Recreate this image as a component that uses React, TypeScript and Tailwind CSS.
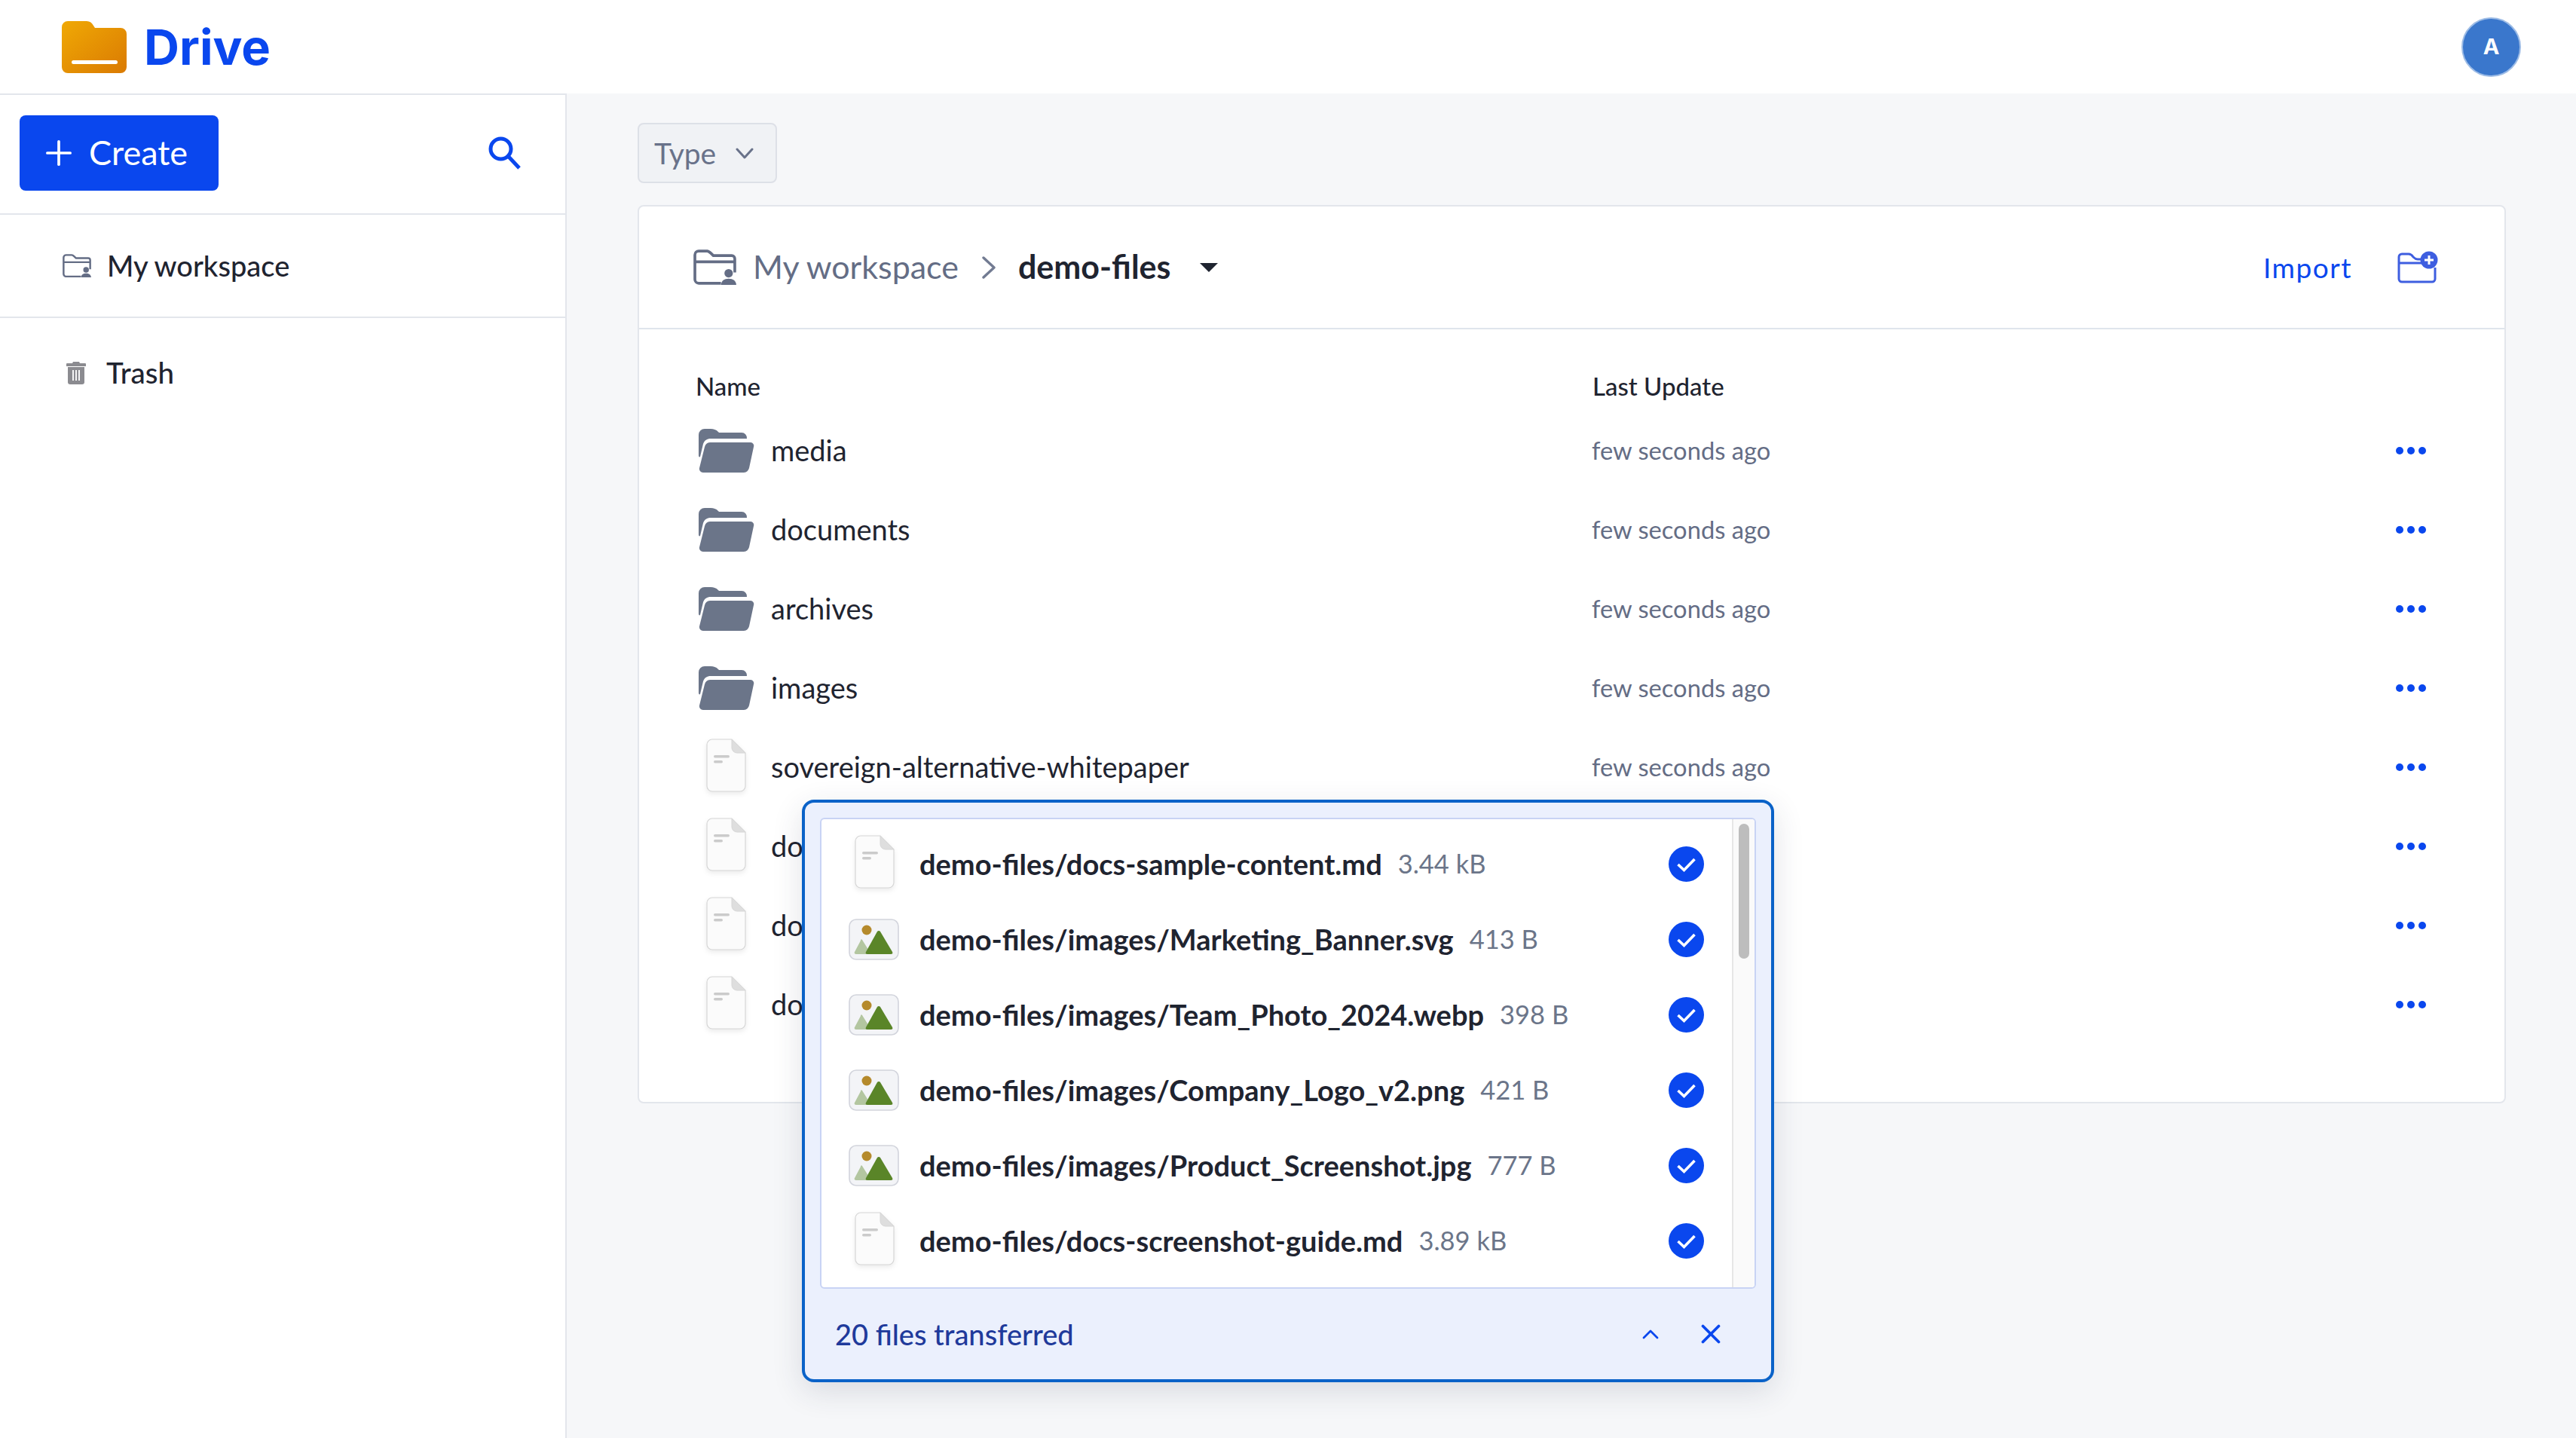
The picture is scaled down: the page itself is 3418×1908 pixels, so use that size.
import { Plus, X } from 'lucide-react';

const font = "font-['Lato','Liberation_Sans',sans-serif]";

const rows = [
  { name: 'media', kind: 'folder' },
  { name: 'documents', kind: 'folder' },
  { name: 'archives', kind: 'folder' },
  { name: 'images', kind: 'folder' },
  { name: 'sovereign-alternative-whitepaper', kind: 'doc' },
  { name: 'docs-intro', kind: 'doc' },
  { name: 'docs-guide', kind: 'doc' },
  { name: 'docs-setup', kind: 'doc' },
];

const transfers = [
  { name: 'demo-files/docs-sample-content.md', size: '3.44 kB', kind: 'doc' },
  { name: 'demo-files/images/Marketing_Banner.svg', size: '413 B', kind: 'image' },
  { name: 'demo-files/images/Team_Photo_2024.webp', size: '398 B', kind: 'image' },
  { name: 'demo-files/images/Company_Logo_v2.png', size: '421 B', kind: 'image' },
  { name: 'demo-files/images/Product_Screenshot.jpg', size: '777 B', kind: 'image' },
  { name: 'demo-files/docs-screenshot-guide.md', size: '3.89 kB', kind: 'doc' },
];

function LogoIcon() {
  return (
    <svg width="86" height="69" viewBox="0 0 86 69">
      <defs>
        <linearGradient id="logoGrad" x1="0" y1="0" x2="1" y2="1">
          <stop offset="0" stopColor="#f0a905" />
          <stop offset="1" stopColor="#da7a02" />
        </linearGradient>
      </defs>
      <path
        d="M8 0h25c4 0 7 2 9 6l2 3h34a8 8 0 0 1 8 8v44a8 8 0 0 1-8 8H8a8 8 0 0 1-8-8V8a8 8 0 0 1 8-8z"
        fill="url(#logoGrad)"
      />
      <rect x="13" y="52" width="61" height="5" rx="2.5" fill="#fff" />
    </svg>
  );
}

function WorkspaceIcon({ size }: { size: number }) {
  return (
    <svg width={size} height={size * 0.84} viewBox="0 0 56 47" fill="none">
      <path
        d="M36 44H7a5 5 0 0 1-5-5V7a5 5 0 0 1 5-5h11c2 0 3 1 5 3l3 3h24a4 4 0 0 1 4 4v18"
        stroke="#646d85"
        strokeWidth="3.6"
        strokeLinejoin="round"
      />
      <path d="M3 16h51" stroke="#646d85" strokeWidth="3.6" />
      <circle cx="46" cy="31" r="5.5" fill="#646d85" />
      <path d="M36 47c0-6 4-9 10-9s10 3 10 9z" fill="#646d85" />
    </svg>
  );
}

function TrashIcon() {
  return (
    <svg width="26" height="30" viewBox="0 0 26 30">
      <path d="M9 0h8l1 2h7a1 1 0 0 1 1 1v3H0V3a1 1 0 0 1 1-1h7z" fill="#8b8b90" />
      <path d="M2 7h22v20a3 3 0 0 1-3 3H5a3 3 0 0 1-3-3z" fill="#8b8b90" />
      <path d="M9 11v14M13 11v14M17 11v14" stroke="#fff" strokeWidth="1.8" />
    </svg>
  );
}

function SearchIcon() {
  return (
    <svg width="44" height="44" viewBox="0 0 44 44" fill="none">
      <circle cx="16.5" cy="16.5" r="13.5" stroke="#0a47ee" strokeWidth="5" />
      <path d="M26 26l15 16" stroke="#0a47ee" strokeWidth="5" />
    </svg>
  );
}

function FolderIcon() {
  return (
    <svg width="74" height="58" viewBox="0 0 74 58" fill="#6b7589">
      <path d="M8 0h8c4 0 7 1 10 4l1 1h30a7 7 0 0 1 7 8H16c-5 0-8 2-10 7L2 37c-1 1-2 0-2-2V8a8 8 0 0 1 8-8z" />
      <path d="M15 18h54a4.5 4.5 0 0 1 4 6l-6 28a8 8 0 0 1-7 6H6a5 5 0 0 1-5-6l7-28a8 8 0 0 1 7-6z" />
    </svg>
  );
}

function DocIcon() {
  return (
    <svg width="54" height="76" viewBox="0 0 54 76" className="drop-shadow-[0_3px_3px_rgba(0,0,0,0.08)]">
      <path
        d="M9 1h26l18 18v44a7 7 0 0 1-7 7H9a7 7 0 0 1-7-7V8a7 7 0 0 1 7-7z"
        fill="#fbfbfb"
        stroke="#d6d6d6"
        strokeWidth="1.2"
      />
      <path d="M35 1l18 18H42a7 7 0 0 1-7-7z" fill="#dedede" stroke="#d6d6d6" strokeWidth="1" />
      <rect x="11" y="22" width="21" height="3.4" rx="1.7" fill="#cbcbcb" />
      <rect x="11" y="29" width="12" height="3.4" rx="1.7" fill="#cbcbcb" />
    </svg>
  );
}

function ImageIcon() {
  return (
    <svg width="67" height="55" viewBox="0 0 67 55">
      <rect x="1" y="1" width="65" height="53" rx="9" fill="#f3f4f7" stroke="#d2d4dc" strokeWidth="1.6" />
      <circle cx="24" cy="15" r="6.5" fill="#b58a2c" />
      <path d="M18 28l10 16-2 3H10c-2 0-3-2-2-3l8-15a1 1 0 0 1 2-1z" fill="#b3c6a0" />
      <path d="M38 17a2.5 2.5 0 0 1 4 0l16 27c1 2 0 3-2 3H25c-2 0-3-1-2-3z" fill="#5a8528" />
    </svg>
  );
}

function FolderPlusIcon() {
  return (
    <svg width="54" height="43" viewBox="0 0 54 43" fill="none">
      <path
        d="M36 11H27c-3 0-4-1-6-3-2-3-3-4-6-4H6a4 4 0 0 0-4 4v29a4 4 0 0 0 4 4h40a4 4 0 0 0 4-4V22M2 16h34"
        stroke="#3e5ee0"
        strokeWidth="3"
      />
      <circle cx="42" cy="12" r="11.5" fill="#3e5ee0" />
      <path d="M42 6v12M36 12h12" stroke="#fff" strokeWidth="3" />
    </svg>
  );
}

function CheckCircle() {
  return (
    <svg width="47" height="47" viewBox="0 0 47 47">
      <circle cx="23.5" cy="23.5" r="23.5" fill="#0a47ee" />
      <path d="M12.5 24l8 7.5L34.5 17" fill="none" stroke="#fff" strokeWidth="3.6" />
    </svg>
  );
}

function Caret({ w, h, d, stroke, width }: { w: number; h: number; d: string; stroke: string; width: number }) {
  return (
    <svg width={w} height={h} viewBox={`0 0 ${w} ${h}`} fill="none">
      <path d={d} stroke={stroke} strokeWidth={width} strokeLinecap="round" strokeLinejoin="round" />
    </svg>
  );
}

function FileRow({ name, kind }: { name: string; kind: string }) {
  return (
    <div className="flex h-[105px] items-center">
      <div className="flex w-[1189px] items-center">
        <div className={`flex w-[100px] justify-center ${kind === 'folder' ? 'pr-[18px]' : 'pr-[20px]'}`}>
          {kind === 'folder' ? <FolderIcon /> : <DocIcon />}
        </div>
        <span className="text-[38px] text-[#1f2430]">{name}</span>
      </div>
      <span className="flex-1 text-[32.7px] text-[#646d85]">few seconds ago</span>
      <div className="mr-[104px] flex gap-[5px]">
        <span className="h-[10px] w-[10px] rounded-full bg-[#0a47ee]" />
        <span className="h-[10px] w-[10px] rounded-full bg-[#0a47ee]" />
        <span className="h-[10px] w-[10px] rounded-full bg-[#0a47ee]" />
      </div>
    </div>
  );
}

function TransferPanel() {
  return (
    <div className="absolute left-[1064px] top-[1061px] flex h-[773px] w-[1290px] flex-col rounded-[16px] border-4 border-[#0a62c8] bg-[#ebf0fd] shadow-[0_12px_40px_rgba(40,50,80,0.14)]">
      <div className="mx-5 mt-5 flex h-[625px] overflow-hidden rounded-[6px] border-2 border-[#c8d3f4] bg-white">
        <div className="flex-1 pt-[9px]">
          {transfers.map((t) => (
            <div key={t.name} className="flex h-[100px] items-center pr-[37px]">
              <div className="flex w-[130px] justify-center pl-[9px]">
                {t.kind === 'doc' ? <DocIcon /> : <ImageIcon />}
              </div>
              <span className="text-[38px] font-bold text-[#1f2430]">{t.name}</span>
              <span className="ml-[21px] flex-1 text-[34.5px] text-[#6b7589]">{t.size}</span>
              <CheckCircle />
            </div>
          ))}
        </div>
        <div className="w-[30px] border-l-2 border-[#e6e6e6] bg-[#fafafa] px-[7px] pt-[6px]">
          <div className="h-[179px] rounded-full bg-[#bdbdbd]" />
        </div>
      </div>
      <div className="flex flex-1 items-center pl-10 pr-[59px]">
        <span className="flex-1 text-[38px] font-medium text-[#1f3a9b]">20 files transferred</span>
        <span className="mr-[48px]">
          <Caret w={22} h={13} d="M2 11l9-9 9 9" stroke="#0a47ee" width={2.8} />
        </span>
        <X size={42} strokeWidth={2.1} className="text-[#0a47ee]" />
      </div>
    </div>
  );
}

export default function App() {
  return (
    <div className={`relative flex h-[1908px] w-[3418px] flex-col overflow-hidden bg-[#f6f7f9] ${font}`}>
      <header className="flex h-[124px] shrink-0 items-center justify-between bg-white pl-[82px] pr-[73px]">
        <div className="flex items-center gap-[23px]">
          <LogoIcon />
          <span className="font-['Inter',sans-serif] text-[65px] font-bold leading-none text-[#0a47ee]">Drive</span>
        </div>
        <div className="flex h-[79px] w-[79px] items-center justify-center rounded-full border-2 border-[#9dbce6] bg-[#3a77cc] font-['Inter',sans-serif] text-[29px] font-bold text-white">
          A
        </div>
      </header>

      <div className="flex flex-1">
        <aside className="w-[752px] shrink-0 border-r-2 border-t-2 border-[#e3e6ec] bg-white">
          <div className="flex h-[159px] items-center justify-between border-b-2 border-[#e3e6ec] pb-[3px] pl-[26px] pr-[58px]">
            <button className="flex h-[100px] w-[264px] items-center gap-[14px] rounded-[8px] bg-[#0a47ee] pl-[26px] text-[45px] text-white">
              <Plus size={52} strokeWidth={1.7} />
              Create
            </button>
            <SearchIcon />
          </div>
          <div className="flex h-[137px] items-center gap-[21px] border-b-2 border-[#e3e6ec] pl-[83px] text-[38px] font-medium text-[#1f2430]">
            <WorkspaceIcon size={38} />
            My workspace
          </div>
          <div className="flex h-[146px] items-center gap-[27px] pl-[88px] text-[38.5px] font-medium text-[#1f2430]">
            <TrashIcon />
            Trash
          </div>
        </aside>

        <main className="flex-1 pl-[94px] pr-[93px] pt-[39px]">
          <div className="flex h-[80px] w-[185px] items-center gap-[26px] rounded-[8px] border-2 border-[#dde0e7] bg-[#f0f2f5] pl-[20px] text-[39px] text-[#69728a]">
            Type
            <Caret w={24} h={15} d="M2 2l10 11L22 2" stroke="#69728a" width={3} />
          </div>

          <section className="mt-[29px] h-[1192px] rounded-[8px] border-2 border-[#e3e6ec] bg-white">
            <div className="flex h-[163px] items-center border-b-2 border-[#dfe5ec] pl-[72px] pr-[88px]">
              <WorkspaceIcon size={57} />
              <span className="ml-[22px] text-[43px] text-[#646d85]">My workspace</span>
              <span className="ml-[30px]">
                <Caret w={20} h={30} d="M3 2l14 13L3 28" stroke="#727b92" width={3.4} />
              </span>
              <span className="ml-[29px] text-[43px] font-bold text-[#1f2430]">demo-files</span>
              <span className="ml-[39px] h-0 w-0 border-x-[12px] border-t-[12px] border-x-transparent border-t-[#1f2430]" />
              <span className="ml-auto text-[37px] tracking-[1.5px] text-[#0a47ee]">Import</span>
              <span className="ml-[60px]">
                <FolderPlusIcon />
              </span>
            </div>
            <div className="pl-[75px]">
              <div className="flex h-[108px] items-center pt-[44px] text-[33px] font-medium text-[#1f2430]">
                <span className="w-[1190px]">Name</span>
                <span>Last Update</span>
              </div>
              {rows.map((r) => (
                <FileRow key={r.name} name={r.name} kind={r.kind} />
              ))}
            </div>
          </section>
        </main>
      </div>

      <TransferPanel />
    </div>
  );
}
